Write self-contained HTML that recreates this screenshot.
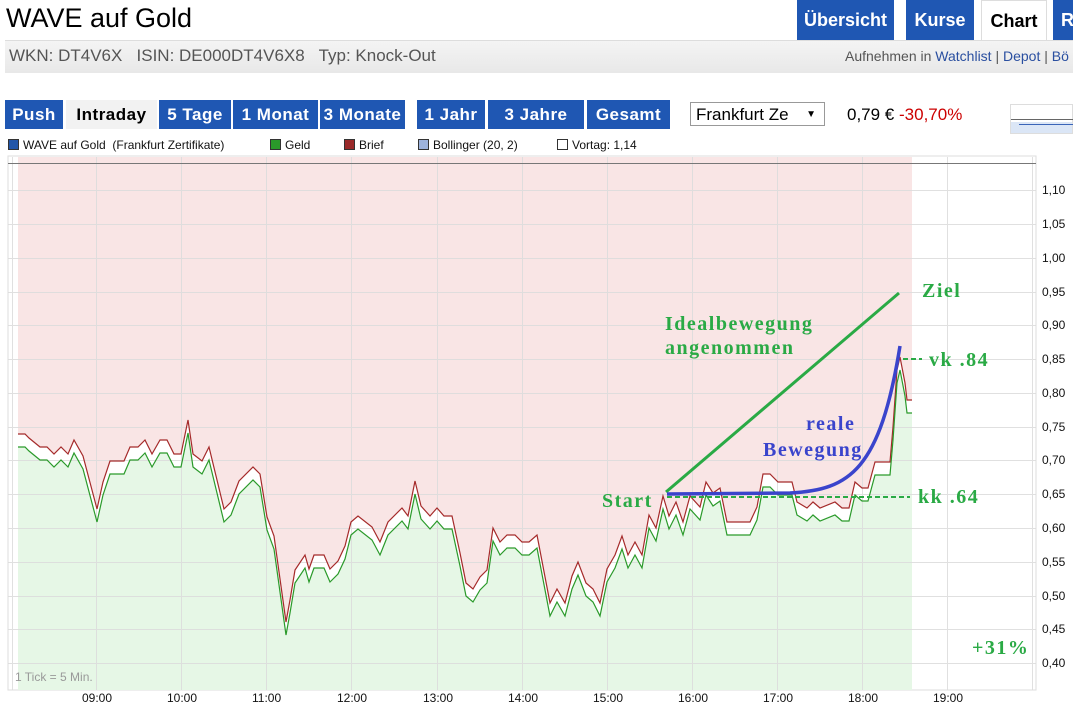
<!DOCTYPE html>
<html><head><meta charset="utf-8"><style>
body{margin:0;width:1073px;height:710px;overflow:hidden;background:#fff;font-family:"Liberation Sans",Arial,sans-serif;position:relative}
.a{position:absolute;white-space:nowrap}
.tab{position:absolute;top:0;height:40px;background:#1f57b3;color:#fff;font-weight:bold;font-size:18px;line-height:40px;text-align:center}
.btn{position:absolute;top:100px;height:29px;background:#1f57b3;color:#fff;font-weight:bold;font-size:17px;letter-spacing:0.5px;line-height:29px;text-align:center}
.lg{position:absolute;top:138px;font-size:12px;color:#111}
.sq{display:inline-block;width:9px;height:9px;border:1px solid #333;vertical-align:-1px;margin-right:4px}
.yl{position:absolute;left:1042px;font-size:12px;color:#111}
.xl{position:absolute;top:691px;font-size:12px;color:#111}
</style></head><body>
<div class="a" style="left:6px;top:3px;font-size:27px;color:#000">WAVE auf Gold</div>
<div class="tab" style="left:797px;width:97px">Übersicht</div>
<div class="tab" style="left:906px;width:68px">Kurse</div>
<div class="tab" style="left:981px;width:64px;background:#fff;color:#000;border:1px solid #ddd;border-bottom:none;height:40px">Chart</div>
<div class="tab" style="left:1053px;width:30px;text-align:left;padding-left:8px">R</div>
<div class="a" style="left:5px;top:40px;width:1068px;height:32px;background:linear-gradient(#f4f4f4,#e8e8e8);border-top:1px solid #ddd"></div>
<div class="a" style="left:9px;top:46px;font-size:17px;color:#555">WKN: DT4V6X&nbsp;&nbsp; ISIN: DE000DT4V6X8&nbsp;&nbsp; Typ: Knock-Out</div>
<div class="a" style="left:845px;top:48px;font-size:14px;color:#555">Aufnehmen in <span style="color:#2a4fa0">Watchlist</span> | <span style="color:#2a4fa0">Depot</span> | <span style="color:#2a4fa0">Bö</span></div>
<div class="btn" style="left:5px;width:58px">Push</div>
<div class="btn" style="left:66px;width:91px;background:#f2f2f2;color:#000">Intraday</div>
<div class="btn" style="left:159px;width:72px">5 Tage</div>
<div class="btn" style="left:233px;width:85px">1 Monat</div>
<div class="btn" style="left:320px;width:85px">3 Monate</div>
<div class="btn" style="left:417px;width:68px">1 Jahr</div>
<div class="btn" style="left:488px;width:96px">3 Jahre</div>
<div class="btn" style="left:587px;width:83px">Gesamt</div>
<div class="a" style="left:690px;top:102px;height:24px;border:1px solid #999;font-size:17px;line-height:24px;padding-left:5px;box-sizing:border-box;width:135px">Frankfurt Ze<span style="position:absolute;right:8px;font-size:10px">▼</span></div>
<div class="a" style="left:847px;top:105px;font-size:17px;color:#000">0,79 € <span style="color:#c00">-30,70%</span></div>
<div class="a" style="left:1010px;top:104px;width:63px;height:30px;border:1px solid #ddd;box-sizing:border-box;background:linear-gradient(#fff 60%,#dbe6f6 60%)"><div style="position:absolute;left:0;top:14px;width:63px;height:1px;background:#666"></div><div style="position:absolute;left:8px;top:19px;width:55px;height:1px;background:#3a64b8"></div></div>
<div class="lg" style="left:8px"><span class="sq" style="background:#2256a8"></span>WAVE auf Gold&nbsp; (Frankfurt Zertifikate)</div>
<div class="lg" style="left:270px"><span class="sq" style="background:#2a9a2a"></span>Geld</div>
<div class="lg" style="left:344px"><span class="sq" style="background:#9a2a2a"></span>Brief</div>
<div class="lg" style="left:418px"><span class="sq" style="background:#9db3dd"></span>Bollinger (20, 2)</div>
<div class="lg" style="left:557px"><span class="sq" style="background:#fff"></span>Vortag: 1,14</div>
<svg class="a" style="left:0;top:0" width="1073" height="710">
<rect x="8" y="156" width="1028" height="534" fill="#fff" stroke="#ddd"/>
<rect x="18" y="157" width="894" height="533" fill="#f9e5e5"/>
<polygon fill="#fff" points="18,690 18,434 25,434 29,438 40,447 47,447 54,454 61,447 68,454 74,440 83,456 97,509 103,482 110,461 124,461 130,447 138,447 145,440 152,454 160,440 167,440 174,454 181,454 188,420 193,454 202,461 209,447 224,509 231,502 239,481 253,467 260,474 267,517 274,536 286,622 290,600 295,570 305,555 309,569 314,555 324,555 330,569 338,561 345,546 351,522 358,516 372,527 380,542 388,522 402,508 408,516 415,481 421,506 430,516 437,508 444,516 452,516 460,553 466,583 473,589 480,577 487,570 493,528 500,542 507,535 515,535 522,542 529,542 537,535 550,603 557,589 565,603 572,576 578,562 586,583 593,589 600,603 607,569 615,555 622,536 628,555 635,542 642,555 649,515 656,528 663,496 669,516 676,502 683,522 690,496 700,507 706,482 713,493 720,488 727,522 750,522 757,507 763,474 770,474 778,482 792,482 797,502 807,508 813,502 820,508 835,502 842,508 849,508 855,482 862,488 868,488 875,462 890,462 893,427 897,370 900,357 905,383 907,400 912,400 912,690"/>
<polygon fill="#e6f7e6" transform="translate(0,13)" points="18,677 18,434 25,434 29,438 40,447 47,447 54,454 61,447 68,454 74,440 83,456 97,509 103,482 110,461 124,461 130,447 138,447 145,440 152,454 160,440 167,440 174,454 181,454 188,420 193,454 202,461 209,447 224,509 231,502 239,481 253,467 260,474 267,517 274,536 286,622 290,600 295,570 305,555 309,569 314,555 324,555 330,569 338,561 345,546 351,522 358,516 372,527 380,542 388,522 402,508 408,516 415,481 421,506 430,516 437,508 444,516 452,516 460,553 466,583 473,589 480,577 487,570 493,528 500,542 507,535 515,535 522,542 529,542 537,535 550,603 557,589 565,603 572,576 578,562 586,583 593,589 600,603 607,569 615,555 622,536 628,555 635,542 642,555 649,515 656,528 663,496 669,516 676,502 683,522 690,496 700,507 706,482 713,493 720,488 727,522 750,522 757,507 763,474 770,474 778,482 792,482 797,502 807,508 813,502 820,508 835,502 842,508 849,508 855,482 862,488 868,488 875,462 890,462 893,427 897,370 900,357 905,383 907,400 912,400 912,677"/>
<g stroke="#ddd" stroke-width="1" opacity="0.9">
<path d="M8 190.5H1036M8 224.5H1036M8 258.5H1036M8 292.5H1036M8 325.5H1036M8 359.5H1036M8 393.5H1036M8 427.5H1036M8 460.5H1036M8 494.5H1036M8 528.5H1036M8 562.5H1036M8 596.5H1036M8 629.5H1036M8 663.5H1036"/>
<path d="M96.5 157V690M181.5 157V690M266.5 157V690M351.5 157V690M437.5 157V690M522.5 157V690M607.5 157V690M692.5 157V690M777.5 157V690M862.5 157V690M947.5 157V690M1032.5 157V690M12.5 157V690"/>
</g>
<line x1="8" y1="163.5" x2="1036" y2="163.5" stroke="#777"/>
<polyline fill="none" stroke="#a52a2a" stroke-width="1.2" points="18,434 25,434 29,438 40,447 47,447 54,454 61,447 68,454 74,440 83,456 97,509 103,482 110,461 124,461 130,447 138,447 145,440 152,454 160,440 167,440 174,454 181,454 188,420 193,454 202,461 209,447 224,509 231,502 239,481 253,467 260,474 267,517 274,536 286,622 290,600 295,570 305,555 309,569 314,555 324,555 330,569 338,561 345,546 351,522 358,516 372,527 380,542 388,522 402,508 408,516 415,481 421,506 430,516 437,508 444,516 452,516 460,553 466,583 473,589 480,577 487,570 493,528 500,542 507,535 515,535 522,542 529,542 537,535 550,603 557,589 565,603 572,576 578,562 586,583 593,589 600,603 607,569 615,555 622,536 628,555 635,542 642,555 649,515 656,528 663,496 669,516 676,502 683,522 690,496 700,507 706,482 713,493 720,488 727,522 750,522 757,507 763,474 770,474 778,482 792,482 797,502 807,508 813,502 820,508 835,502 842,508 849,508 855,482 862,488 868,488 875,462 890,462 893,427 897,370 900,357 905,383 907,400 912,400"/>
<polyline fill="none" stroke="#2a9a2a" stroke-width="1.2" transform="translate(0,13)" points="18,434 25,434 29,438 40,447 47,447 54,454 61,447 68,454 74,440 83,456 97,509 103,482 110,461 124,461 130,447 138,447 145,440 152,454 160,440 167,440 174,454 181,454 188,420 193,454 202,461 209,447 224,509 231,502 239,481 253,467 260,474 267,517 274,536 286,622 290,600 295,570 305,555 309,569 314,555 324,555 330,569 338,561 345,546 351,522 358,516 372,527 380,542 388,522 402,508 408,516 415,481 421,506 430,516 437,508 444,516 452,516 460,553 466,583 473,589 480,577 487,570 493,528 500,542 507,535 515,535 522,542 529,542 537,535 550,603 557,589 565,603 572,576 578,562 586,583 593,589 600,603 607,569 615,555 622,536 628,555 635,542 642,555 649,515 656,528 663,496 669,516 676,502 683,522 690,496 700,507 706,482 713,493 720,488 727,522 750,522 757,507 763,474 770,474 778,482 792,482 797,502 807,508 813,502 820,508 835,502 842,508 849,508 855,482 862,488 868,488 875,462 890,462 893,427 897,370 900,357 905,383 907,400 912,400"/>
<line x1="666" y1="492" x2="899" y2="293" stroke="#2aaa45" stroke-width="3"/>
<line x1="667" y1="497" x2="910" y2="497" stroke="#2aaa45" stroke-width="2" stroke-dasharray="5,3"/>
<line x1="903" y1="359" x2="922" y2="359" stroke="#2aaa45" stroke-width="2" stroke-dasharray="5,3"/>
<path d="M667 494 L790 493 C850 490 880 470 900 346" fill="none" stroke="#3a44cc" stroke-width="3.5"/>
<g font-family="Liberation Serif,serif" font-weight="bold" font-size="20" fill="#2aaa45" letter-spacing="1.5">
<text x="922" y="297">Ziel</text>
<text x="665" y="330">Idealbewegung</text>
<text x="665" y="354">angenommen</text>
<text x="602" y="507">Start</text>
<text x="929" y="366">vk .84</text>
<text x="918" y="503">kk .64</text>
<text x="972" y="654">+31%</text>
</g>
<g font-family="Liberation Serif,serif" font-weight="bold" font-size="20" fill="#3a44cc" letter-spacing="1.5">
<text x="806" y="430">reale</text>
<text x="763" y="456">Bewegung</text>
</g>
<text x="15" y="681" font-size="12" fill="#999" font-family="Liberation Sans,sans-serif">1 Tick = 5 Min.</text>
</svg>
<div class="yl" style="top:183px">1,10</div><div class="yl" style="top:217px">1,05</div><div class="yl" style="top:251px">1,00</div><div class="yl" style="top:285px">0,95</div><div class="yl" style="top:318px">0,90</div><div class="yl" style="top:352px">0,85</div><div class="yl" style="top:386px">0,80</div><div class="yl" style="top:420px">0,75</div><div class="yl" style="top:453px">0,70</div><div class="yl" style="top:487px">0,65</div><div class="yl" style="top:521px">0,60</div><div class="yl" style="top:555px">0,55</div><div class="yl" style="top:589px">0,50</div><div class="yl" style="top:622px">0,45</div><div class="yl" style="top:656px">0,40</div>
<div class="xl" style="left:82px">09:00</div><div class="xl" style="left:167px">10:00</div><div class="xl" style="left:252px">11:00</div><div class="xl" style="left:337px">12:00</div><div class="xl" style="left:423px">13:00</div><div class="xl" style="left:508px">14:00</div><div class="xl" style="left:593px">15:00</div><div class="xl" style="left:678px">16:00</div><div class="xl" style="left:763px">17:00</div><div class="xl" style="left:848px">18:00</div><div class="xl" style="left:933px">19:00</div>
</body></html>
